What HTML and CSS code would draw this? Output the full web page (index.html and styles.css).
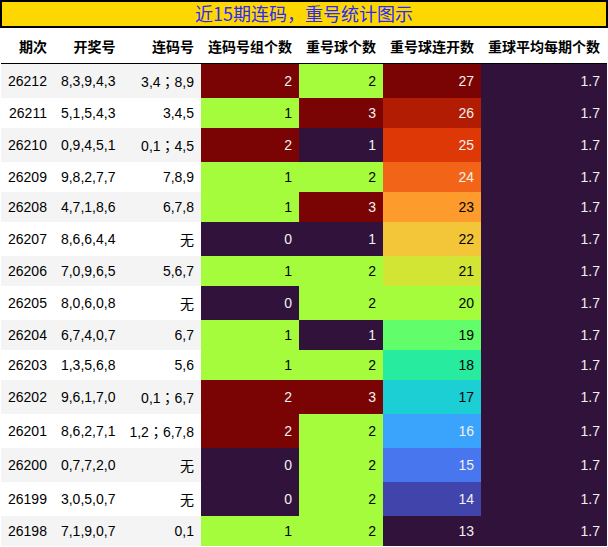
FILE: index.html
```html
<!DOCTYPE html>
<html lang="zh">
<head>
<meta charset="utf-8">
<title>近15期连码，重号统计图示</title>
<link rel="stylesheet" href="styles.css">
</head>
<body>
<div class="title">近15期连码，重号统计图示</div>
<table class="stats">
<thead>
<tr><th>期次</th><th>开奖号</th><th>连码号</th><th>连码号组个数</th><th>重号球个数</th><th>重号球连开数</th><th>重球平均每期个数</th></tr>
</thead>
<tbody>
<tr><td>26212</td><td>8,3,9,4,3</td><td>3,4；8,9</td><td class="c-hi">2</td><td class="c-mid">2</td><td class="g27">27</td><td class="c-lo">1.7</td></tr>
<tr><td>26211</td><td>5,1,5,4,3</td><td>3,4,5</td><td class="c-mid">1</td><td class="c-hi">3</td><td class="g26">26</td><td class="c-lo">1.7</td></tr>
<tr><td>26210</td><td>0,9,4,5,1</td><td>0,1；4,5</td><td class="c-hi">2</td><td class="c-lo">1</td><td class="g25">25</td><td class="c-lo">1.7</td></tr>
<tr><td>26209</td><td>9,8,2,7,7</td><td>7,8,9</td><td class="c-mid">1</td><td class="c-mid">2</td><td class="g24">24</td><td class="c-lo">1.7</td></tr>
<tr><td>26208</td><td>4,7,1,8,6</td><td>6,7,8</td><td class="c-mid">1</td><td class="c-hi">3</td><td class="g23">23</td><td class="c-lo">1.7</td></tr>
<tr><td>26207</td><td>8,6,6,4,4</td><td>无</td><td class="c-lo">0</td><td class="c-lo">1</td><td class="g22">22</td><td class="c-lo">1.7</td></tr>
<tr><td>26206</td><td>7,0,9,6,5</td><td>5,6,7</td><td class="c-mid">1</td><td class="c-mid">2</td><td class="g21">21</td><td class="c-lo">1.7</td></tr>
<tr><td>26205</td><td>8,0,6,0,8</td><td>无</td><td class="c-lo">0</td><td class="c-mid">2</td><td class="g20">20</td><td class="c-lo">1.7</td></tr>
<tr><td>26204</td><td>6,7,4,0,7</td><td>6,7</td><td class="c-mid">1</td><td class="c-lo">1</td><td class="g19">19</td><td class="c-lo">1.7</td></tr>
<tr><td>26203</td><td>1,3,5,6,8</td><td>5,6</td><td class="c-mid">1</td><td class="c-mid">2</td><td class="g18">18</td><td class="c-lo">1.7</td></tr>
<tr><td>26202</td><td>9,6,1,7,0</td><td>0,1；6,7</td><td class="c-hi">2</td><td class="c-hi">3</td><td class="g17">17</td><td class="c-lo">1.7</td></tr>
<tr><td>26201</td><td>8,6,2,7,1</td><td>1,2；6,7,8</td><td class="c-hi">2</td><td class="c-mid">2</td><td class="g16">16</td><td class="c-lo">1.7</td></tr>
<tr><td>26200</td><td>0,7,7,2,0</td><td>无</td><td class="c-lo">0</td><td class="c-mid">2</td><td class="g15">15</td><td class="c-lo">1.7</td></tr>
<tr><td>26199</td><td>3,0,5,0,7</td><td>无</td><td class="c-lo">0</td><td class="c-mid">2</td><td class="g14">14</td><td class="c-lo">1.7</td></tr>
<tr><td>26198</td><td>7,1,9,0,7</td><td>0,1</td><td class="c-mid">1</td><td class="c-mid">2</td><td class="g13">13</td><td class="c-lo">1.7</td></tr>
</tbody>
</table>
</body>
</html>
```
FILE: styles.css
```css
html, body {
  margin: 0;
  padding: 0;
  background: #ffffff;
  font-family: "Liberation Sans", "Noto Sans CJK SC", sans-serif;
  font-size: 14px;
  color: #000000;
}

.title {
  width: 604px;
  height: 24px;
  line-height: 23px;
  border: 2px solid #000000;
  background: #ffd700;
  color: #2a2aff;
  font-size: 18px;
  text-align: center;
  font-family: "Noto Sans CJK SC", sans-serif;
}

.stats {
  border-collapse: collapse;
  margin-left: 1px;
  white-space: nowrap;
  font-family: "Liberation Sans", "Noto Sans CJK TC", sans-serif;
}

.stats th,
.stats td {
  padding: 7px 7px;
  text-align: right;
}

.stats td {
  font-weight: normal;
}

.stats th {
  font-weight: bold;
  padding-top: 8px;
  border-bottom: 1px solid #000000;
}

.stats tbody tr:nth-child(odd) td {
  background: #f4f4f4;
}

.stats tbody tr td.c-lo { background: #30123b; color: #f1f1f1; }
.stats tbody tr td.c-mid { background: #a4fc3c; color: #000000; }
.stats tbody tr td.c-hi { background: #7a0403; color: #f1f1f1; }

.stats tbody tr td.g27 { background: #7a0403; color: #f1f1f1; }
.stats tbody tr td.g26 { background: #b11c02; color: #f1f1f1; }
.stats tbody tr td.g25 { background: #dd3806; color: #f1f1f1; }
.stats tbody tr td.g24 { background: #f26518; color: #f1f1f1; }
.stats tbody tr td.g23 { background: #fe9b2d; color: #000000; }
.stats tbody tr td.g22 { background: #f3c63a; color: #000000; }
.stats tbody tr td.g21 { background: #d2e535; color: #000000; }
.stats tbody tr td.g20 { background: #a4fc3c; color: #000000; }
.stats tbody tr td.g19 { background: #62fd6a; color: #000000; }
.stats tbody tr td.g18 { background: #27eca0; color: #000000; }
.stats tbody tr td.g17 { background: #1bcfd4; color: #000000; }
.stats tbody tr td.g16 { background: #3aa3fc; color: #f1f1f1; }
.stats tbody tr td.g15 { background: #4776ee; color: #f1f1f1; }
.stats tbody tr td.g14 { background: #4145ab; color: #f1f1f1; }
.stats tbody tr td.g13 { background: #30123b; color: #f1f1f1; }
```
